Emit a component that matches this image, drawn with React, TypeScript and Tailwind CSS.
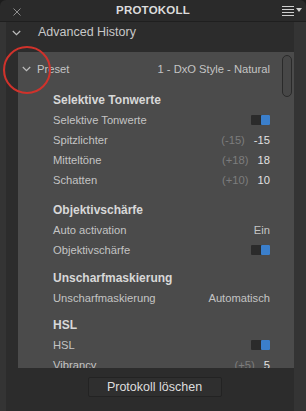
import React from 'react';

type Row =
  | { kind: 'head'; label: string; gap: string }
  | { kind: 'text'; label: string; value: string }
  | { kind: 'num'; label: string; prev: string; value: string }
  | { kind: 'toggle'; label: string };

const rows: Row[] = [
  { kind: 'head', label: 'Selektive Tonwerte', gap: 'mt-[11px]' },
  { kind: 'toggle', label: 'Selektive Tonwerte' },
  { kind: 'num', label: 'Spitzlichter', prev: '(-15)', value: '-15' },
  { kind: 'num', label: 'Mitteltöne', prev: '(+18)', value: '18' },
  { kind: 'num', label: 'Schatten', prev: '(+10)', value: '10' },
  { kind: 'head', label: 'Objektivschärfe', gap: 'mt-[10px]' },
  { kind: 'text', label: 'Auto activation', value: 'Ein' },
  { kind: 'toggle', label: 'Objektivschärfe' },
  { kind: 'head', label: 'Unscharfmaskierung', gap: 'mt-[8px]' },
  { kind: 'text', label: 'Unscharfmaskierung', value: 'Automatisch' },
  { kind: 'head', label: 'HSL', gap: 'mt-[7px]' },
  { kind: 'toggle', label: 'HSL' },
  { kind: 'num', label: 'Vibrancy', prev: '(+5)', value: '5' },
];

function Toggle() {
  return (
    <div className="flex h-[10px] w-[19px] justify-end rounded-[1px] bg-[#2b2b2b]">
      <div className="h-[10px] w-[9px] rounded-[1px] bg-[#3b7fcb]" />
    </div>
  );
}

function Chevron() {
  return (
    <svg width="9" height="6" viewBox="0 0 9 6" fill="none">
      <path d="M0.8 1l3.7 3.7L8.2 1" stroke="#bdbdbd" strokeWidth="1.2" />
    </svg>
  );
}

function Item({ row }: { row: Row }) {
  if (row.kind === 'head') {
    return (
      <div className={`${row.gap} flex h-[20px] items-center text-[12px] font-bold text-[#d8d8d8]`}>
        {row.label}
      </div>
    );
  }
  return (
    <div className="flex h-[20px] items-center justify-between text-[#c4c4c4]">
      <span>{row.label}</span>
      {row.kind === 'toggle' && <Toggle />}
      {row.kind === 'text' && <span>{row.value}</span>}
      {row.kind === 'num' && (
        <span className="flex gap-[9px]">
          <span className="text-[#7d7d7d]">{row.prev}</span>
          <span className="text-[#e2e2e2]">{row.value}</span>
        </span>
      )}
    </div>
  );
}

export default function App() {
  return (
    <div
      className="relative h-[411px] w-[306px] overflow-hidden bg-[#1c1c1c]"
      style={{ fontFamily: '"Liberation Sans", Arial, sans-serif' }}
    >
      <div className="flex h-full flex-col text-[11.2px]">
        <div className="relative flex h-[22px] shrink-0 items-center justify-center rounded-t-[6px] border-b border-[#1f1f1f] bg-[#2a2a2a]">
          <span className="absolute left-[13px] top-[8px]">
            <svg width="8" height="8" viewBox="0 0 8 8">
              <path d="M0.5 0.5l7 7M7.5 0.5l-7 7" stroke="#8e8e8e" strokeWidth="1" />
            </svg>
          </span>
          <span className="text-[11.5px] font-bold tracking-[0.2px] text-[#dcdcdc]">PROTOKOLL</span>
          <span className="absolute right-[4px] top-[5px] flex items-center gap-[1px]">
            <svg width="13" height="11" viewBox="0 0 13 11">
              <path d="M0 1.5h12M0 4.5h12M0 7.5h12M0 10.5h12" stroke="#cfcfcf" strokeWidth="1" />
            </svg>
            <svg width="6" height="5" viewBox="0 0 6 5">
              <path d="M0 0h6L3 4z" fill="#cfcfcf" />
            </svg>
          </span>
        </div>

        <div className="flex flex-1 bg-[#343434]">
          <div className="ml-[6px] mr-[12px] flex flex-1 flex-col bg-[#2c2c2c]">
            <div className="flex h-[21px] items-center gap-[17px] pl-[6px] text-[12.5px] text-[#c8c8c8]">
              <Chevron />
              <span>Advanced History</span>
            </div>

            <div className="ml-[12px] mt-[9px] flex h-[316px] overflow-hidden bg-[#4b4b4b]">
              <div className="flex-1 pl-[4px] pr-[12px]">
                <div className="mt-[7px] flex h-[20px] items-center justify-between text-[#c4c4c4]">
                  <span className="flex items-center gap-[6px]">
                    <Chevron />
                    <span>Preset</span>
                  </span>
                  <span>1 - DxO Style - Natural</span>
                </div>
                <div className="pl-[31px]">
                  {rows.map((r, i) => (
                    <Item key={i} row={r} />
                  ))}
                </div>
              </div>
              <div className="w-[12px] pt-[3px] pr-[1px]">
                <div className="h-[42px] w-[10px] rounded-full border border-[#2a2a2a] bg-[#474747]" />
              </div>
            </div>

            <div className="flex justify-center pt-[9px]">
              <button className="ml-[9px] h-[20px] w-[134px] rounded-[2px] border border-[#232323] bg-[#2f2f2f] text-[12.5px] text-[#dedede]">
                Protokoll löschen
              </button>
            </div>
          </div>
        </div>
      </div>

      <div className="absolute left-[3px] top-[46px] h-[48px] w-[48px] rounded-full border-[2.5px] border-[#d0322b]" />
    </div>
  );
}
